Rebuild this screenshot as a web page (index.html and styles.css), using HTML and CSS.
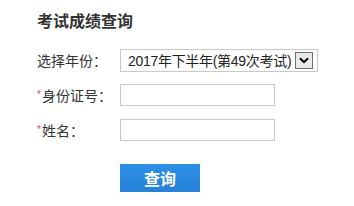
FILE: index.html
```html
<!DOCTYPE html>
<html lang="zh-CN">
<head>
    <meta charset="UTF-8">
    <meta name="viewport" content="width=device-width, initial-scale=1.0">
    <title>考试成绩查询</title>
    <link rel="stylesheet" href="styles.css">
</head>
<body>
    <div class="container">
        <h1 class="title">考试成绩查询</h1>

        <form class="query-form">
            <div class="form-row">
                <label>选择年份：</label>
                <div class="select-box">
                    <select class="select">
                        <option>2017年下半年(第49次考试)</option>
                    </select>
                    <span class="select-arrow">
                        <svg width="10" height="7" viewBox="0 0 10 7">
                            <path d="M1 1.2 L5 5.2 L9 1.2" fill="none" stroke="#000" stroke-width="2"/>
                        </svg>
                    </span>
                </div>
            </div>
            <div class="form-row">
                <label><i class="required">*</i>身份证号：</label>
                <input type="text" class="input">
            </div>
            <div class="form-row">
                <label><i class="required">*</i>姓名：</label>
                <input type="text" class="input">
            </div>
            <div class="btn-row">
                <button type="button" class="btn">查询</button>
            </div>
        </form>
    </div>
</body>
</html>
```

FILE: styles.css
```css
* {
    margin: 0;
    padding: 0;
    box-sizing: border-box;
    font-family: "Liberation Sans", "Noto Sans CJK SC", sans-serif;
}

body {
    background-color: #fff;
    color: #333;
}

.container {
    padding: 12px 0 0 37px;
}

.title {
    font-size: 16px;
    line-height: 20px;
    font-weight: bold;
    color: #333;
    margin-bottom: 17px;
}

.form-row {
    display: flex;
    align-items: center;
    margin-bottom: 12px;
}

.form-row + .form-row {
    margin-bottom: 13px;
}

.form-row label {
    width: 83px;
    font-size: 14px;
    line-height: 20px;
    color: #333;
}

.required {
    font-style: normal;
    color: #e8366b;
    font-size: 10px;
    vertical-align: 3px;
    margin-right: 1px;
}

.select-box {
    position: relative;
    width: 198px;
    height: 23px;
    border: 1px solid #c8c8c8;
    background-color: #fff;
}

.select {
    appearance: none;
    -webkit-appearance: none;
    border: none;
    outline: none;
    background: transparent;
    width: 100%;
    height: 100%;
    padding: 0 24px 0 7px;
    font-size: 14px;
    letter-spacing: -0.3px;
    color: #222;
}

.select-arrow {
    position: absolute;
    top: 2px;
    right: 4px;
    width: 18px;
    height: 17px;
    border: 1px solid #707070;
    background-color: #e9e9e9;
    display: flex;
    align-items: center;
    justify-content: center;
    pointer-events: none;
}

.input {
    width: 155px;
    height: 22px;
    border: 1px solid #c8c8c8;
    outline: none;
    padding: 0 5px;
    font-size: 14px;
}

.btn-row {
    margin-top: 23px;
    padding-left: 83px;
}

.btn {
    display: block;
    width: 80px;
    height: 28px;
    border: none;
    background: linear-gradient(#2d8fe6, #2580d8);
    color: #fff;
    font-size: 16px;
    font-weight: bold;
    cursor: pointer;
}
```
